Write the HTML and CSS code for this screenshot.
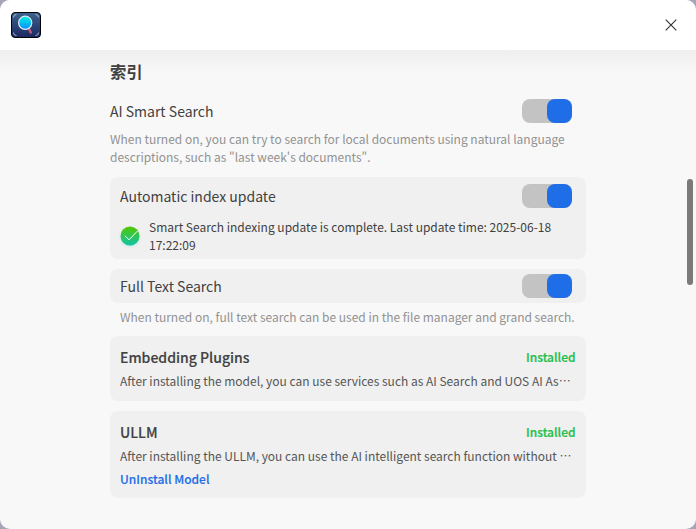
FILE: index.html
```html
<!DOCTYPE html>
<html lang="zh">
<head><meta charset="utf-8"><title>Search settings</title><link rel="stylesheet" href="styles.css"></head>
<body>
<div class="window">
<header class="titlebar">
<svg class="logo" width="30" height="26" viewBox="0 0 30 26"><defs><linearGradient id="bg" x2="0" y2="1"><stop stop-color="#3d638c"/><stop offset="1" stop-color="#1c2760"/></linearGradient><linearGradient id="lens" x2="0" y2="1"><stop stop-color="#00f0e2"/><stop offset="1" stop-color="#078cff"/></linearGradient></defs><rect x=".5" y=".5" width="29" height="25" rx="3.500" fill="url(#bg)" stroke="#02040c"/><path d="M2.500 5.500q0-3 3-3M24.500 2.500q3 0 3 3M2.500 20.500q0 3 3 3M24.500 23.500q3 0 3-3" fill="none" stroke="#a0b8d8"/><path d="M17.800 16.500l2 4" stroke="#c95772" stroke-width="2.400" stroke-linecap="round"/><circle cx="14.200" cy="10.800" r="6.600" fill="url(#lens)" stroke="#dceaf5" stroke-width="1.200"/></svg>
<svg class="close" width="12" height="12" viewBox="0 0 12 12"><path d="M.7.7l10.600 10.600M11.300.7L.7 11.300" stroke="#303030" stroke-width="1.100"/></svg>
</header>
<main class="content">
<h1>索引</h1>
<section class="row plain"><span>AI Smart Search</span><i class="switch"></i></section>
<p class="hint">When turned on, you can try to search for local documents using natural language<br>descriptions, such as "last week's documents".</p>
<section class="card auto"><div class="row"><span>Automatic index update</span><i class="switch"></i></div>
<div class="status"><svg width="20" height="20" viewBox="0 0 20 20"><defs><linearGradient id="ok" x2="0" y2="1"><stop stop-color="#50c800"/><stop offset="1" stop-color="#0fc3a8"/></linearGradient></defs><circle cx="10" cy="10" r="9.500" fill="url(#ok)"/><path d="M5 9.800l4 4L17.500 5" fill="none" stroke="#fff" stroke-width="1"/></svg><p>Smart Search indexing update is complete. Last update time: 2025-06-18<br>17:22:09</p></div></section>
<section class="card full row"><span>Full Text Search</span><i class="switch"></i></section>
<p class="hint inset">When turned on, full text search can be used in the file manager and grand search.</p>
<section class="card model"><div class="head"><h2>Embedding Plugins</h2><b>Installed</b></div><p>After installing the model, you can use services such as AI Search and UOS AI As<span class="dots">⋯</span></p></section>
<section class="card model ullm"><div class="head"><h2>ULLM</h2><b>Installed</b></div><p>After installing the ULLM, you can use the AI intelligent search function without <span class="dots">⋯</span></p><a>UnInstall Model</a></section>
</main>
<div class="scrollbar"></div>
</div>
</body></html>
```
FILE: styles.css
```css
*{box-sizing:border-box}
body{margin:0;background:#a5a5b5;font-family:"Noto Sans CJK SC",sans-serif;color:#414141}
h1,h2,p{margin:0}
.window{position:relative;height:529px;background:linear-gradient(#efefef 50px,#f8f8f8 74px);border-radius:10px;overflow:hidden}
.titlebar{height:50px;background:#fff;display:flex;align-items:center;justify-content:space-between;padding:0 19px 0 11px}
.content{width:476px;margin-left:110px;padding-top:9px}
h1{font-size:16.300px;line-height:24px;font-weight:700}
.row{display:flex;align-items:center;justify-content:space-between;font-size:14px;line-height:24px}
.plain{margin-top:16px;padding-right:14px}
.switch{width:50px;height:24px;border-radius:8px;background:#c3c3c3;display:flex;justify-content:flex-end}
.switch::after{content:"";width:25px;height:24px;border-radius:8px;background:#1f6ee7}
.hint{font-size:11.990px;line-height:18px;color:#929292;margin-top:7px;white-space:nowrap}
.card{background:#f0f0f0;border-radius:8px;padding:0 14px 0 10px}
.auto{height:82px;margin-top:11px;padding-top:7px}
.status{display:flex;align-items:center;gap:9px;margin-top:10px;font-size:11.990px;line-height:18px;white-space:nowrap}
.status svg{flex:none;filter:drop-shadow(0 1px 1px #10c99340)}
.full{height:34px;margin-top:10px}
.inset{margin:5px 0 0 10px}
.model{height:65px;margin-top:10px;padding:9px 10.500px 0 10px}
.head{display:flex;justify-content:space-between;align-items:center;height:24px}
h2{font-size:14px;font-weight:500;-webkit-text-stroke:.15px}
.head b{font-size:12px;line-height:18px;font-weight:500;color:#1fbf4a;-webkit-text-stroke:.2px}
.model p{font-size:11.990px;line-height:18px;margin-top:3px;color:#555;white-space:nowrap}
.ullm{height:87px;margin-top:10px}
.ullm a{display:block;font-size:12px;line-height:18px;font-weight:500;color:#1f6ee7;margin-top:5px;-webkit-text-stroke:.15px}
.scrollbar{position:absolute;right:3px;top:179px;width:6px;height:106px;border-radius:3px;background:#7a7a7a}
```
